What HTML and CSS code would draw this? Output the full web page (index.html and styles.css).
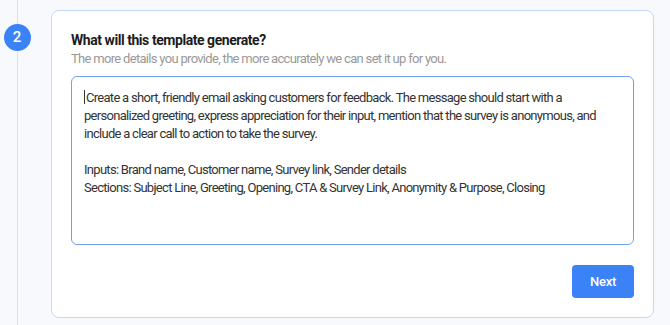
FILE: index.html
```html
<!DOCTYPE html>
<html lang="en">
<head>
  <meta charset="UTF-8">
  <title>Template wizard</title>
  <link rel="stylesheet" href="styles.css">
</head>
<body>

  <div class="step">
    <div class="step-rail">
      <span class="step-num">2</span>
    </div>

    <div class="step-card">
      <h2>What will this template generate?</h2>
      <p class="hint">The more details you provide, the more accurately we can set it up for you.</p>

      <div class="prompt-box"><span class="caret"></span>Create a short, friendly email asking customers for feedback. The message should start with a personalized greeting, express appreciation for their input, mention that the survey is anonymous, and include a clear call to action to take the survey.

Inputs: Brand name, Customer name, Survey link, Sender details
Sections: Subject Line, Greeting, Opening, CTA &amp; Survey Link, Anonymity &amp; Purpose, Closing</div>

      <div class="actions">
        <button class="next-button">Next</button>
      </div>
    </div>
  </div>

</body>
</html>
```

FILE: styles.css
```css
body {
  font-family: Roboto, "Noto Sans", Arial, sans-serif;
  background: #f7f9fd;
  margin: 0;
  padding: 0;
}

.step {
  display: flex;
  height: 325px;
  padding-top: 10px;
  box-sizing: border-box;
}

.step-rail {
  width: 34px;
  margin-top: -10px;
  margin-right: 17px;
  display: flex;
  justify-content: center;
  background: linear-gradient(#d3e0f7, #d3e0f7) no-repeat center / 1px 100%;
}

.step-num {
  width: 27px;
  height: 27px;
  margin-top: 24px;
  border-radius: 50%;
  background: #3b82f6;
  color: #fff;
  font-size: 15px;
  font-weight: 500;
  line-height: 27px;
  text-align: center;
}

.step-card {
  width: 563px;
  height: 267px;
  background: #fff;
  border: 1px solid #c5d7fa;
  border-radius: 8px;
  padding: 19px 19px 20px 19px;
}

.step-card h2 {
  margin: 0;
  font-size: 14px;
  font-weight: 700;
  line-height: 20px;
  letter-spacing: -0.45px;
  color: #1c1c1c;
}

.hint {
  margin: 1px 0 0;
  font-size: 13px;
  line-height: 16px;
  letter-spacing: -0.69px;
  color: #999;
}

.prompt-box {
  margin-top: 9px;
  height: 143px;
  border: 1px solid #6e9ef2;
  border-radius: 6px;
  padding: 12px;
  font-size: 13px;
  line-height: 18px;
  letter-spacing: -0.71px;
  color: #333;
  white-space: pre-wrap;
}

.caret {
  display: inline-block;
  width: 0;
  height: 14px;
  margin-right: 1px;
  border-left: 1px solid #333;
  vertical-align: -2px;
}

.actions {
  display: flex;
  justify-content: flex-end;
  margin-top: 20px;
}

.next-button {
  background-color: #3b82f6;
  color: white;
  border: none;
  border-radius: 4px;
  width: 62px;
  height: 33px;
  font-family: inherit;
  font-size: 13px;
  font-weight: 500;
  letter-spacing: -0.3px;
  cursor: pointer;
}
```
